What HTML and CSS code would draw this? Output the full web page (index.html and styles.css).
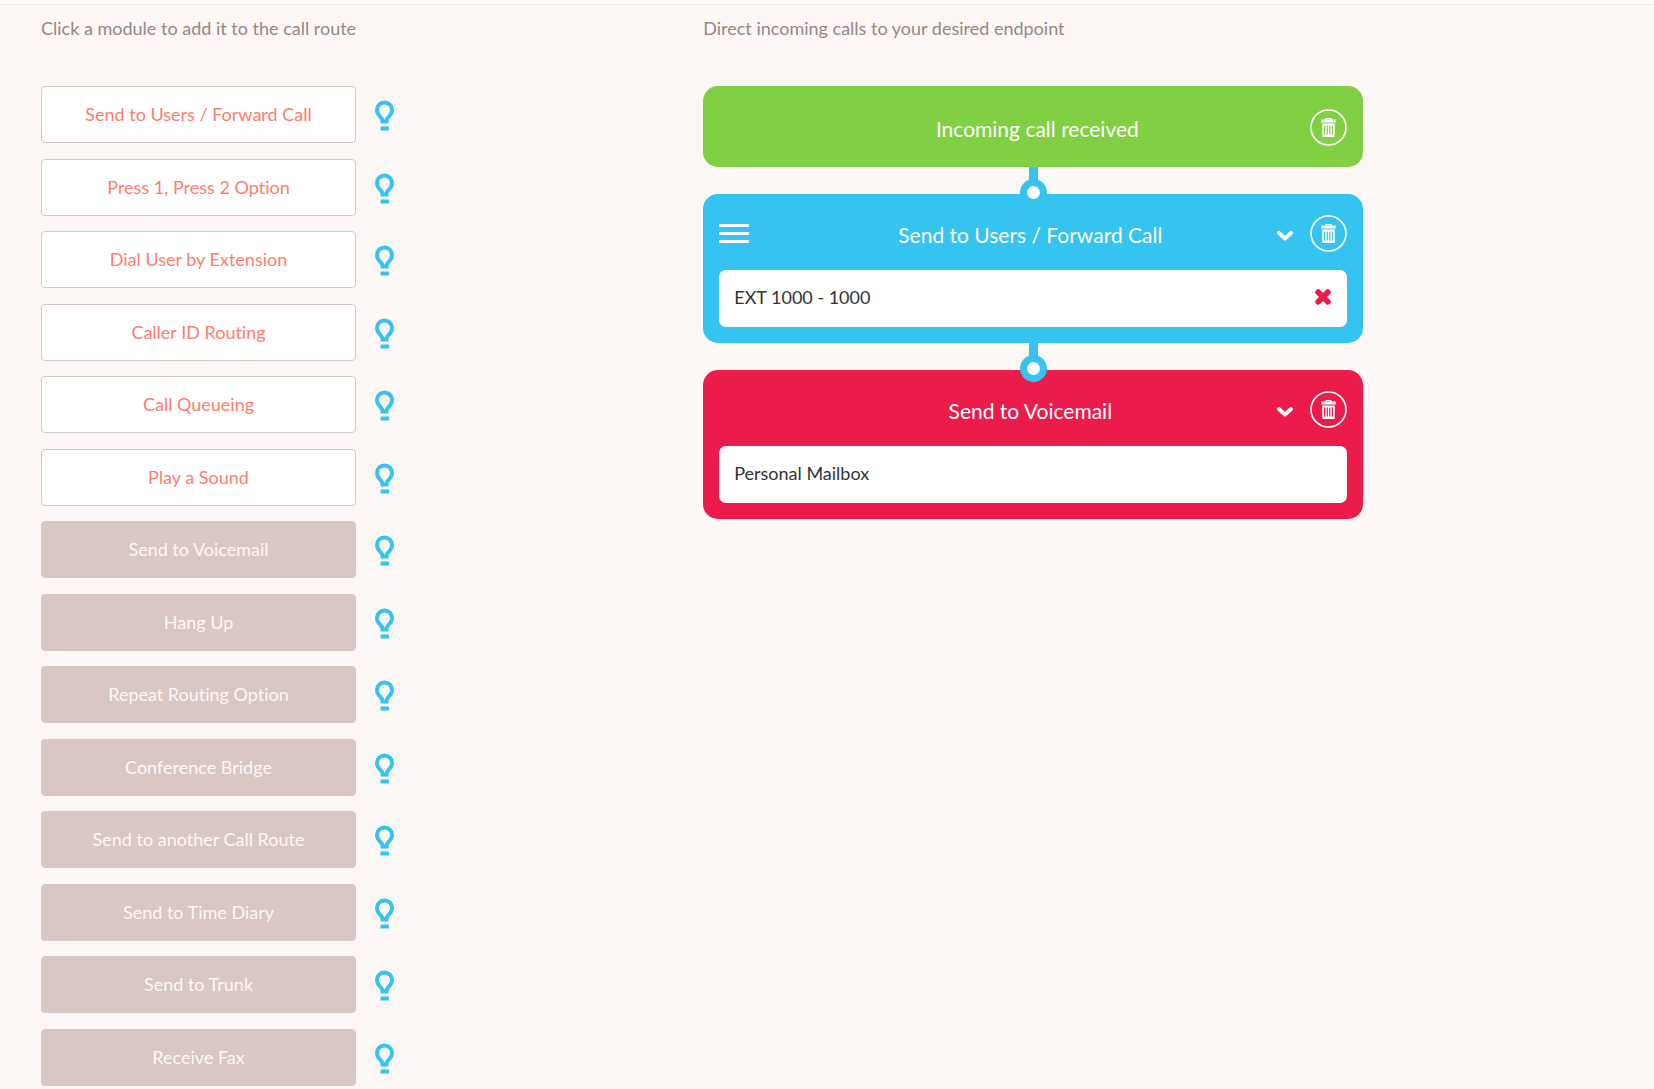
FILE: index.html
```
<!DOCTYPE html>
<html lang="en">
<head>
    <meta charset="UTF-8">
    <meta name="viewport" content="width=device-width, initial-scale=1.0">
    <title>Call Route</title>
    <link rel="stylesheet" href="styles.css">
</head>
<body>

    <!-- Shared icons -->
    <svg class="icon-defs" aria-hidden="true">
        <symbol id="icon-bulb" viewBox="0 0 19 31">
            <path fill-rule="evenodd" d="M9.5 0.5A9.4 9.4 0 0 1 19 10c0 3.200-1.500 5.400-3.200 7.300-1.600 1.800-2.300 2.600-2.300 4.200V23.500h-8V21.500c0-1.600-.7-2.400-2.300-4.200C1.500 15.400 0 13.200 0 10A9.400 9.400 0 0 1 9.500 .5zM9.500 4.500A5.400 5.400 0 0 0 4 10c0 2.300 1 3.600 2.500 5.200C8 16.800 9 18.200 9.500 20c.5-1.800 1.500-3.200 3-4.800C14 13.600 15 12.300 15 10A5.400 5.400 0 0 0 9.500 4.500z"/>
            <path d="M5.500 26.500h8.500v4h-8.500z"/>
        </symbol>
        <symbol id="icon-trash" viewBox="0 0 37 37">
            <circle cx="18.500" cy="18.500" r="17.500" fill="none" stroke="currentColor" stroke-width="1.700"/>
            <path fill-rule="evenodd" d="M15 10.500q0-1.500 1.500-1.500h4q1.500 0 1.500 1.500h3q.8 0 .8 1v2H11.200v-2q0-1 .8-1zM16.500 10.500h4v-.6h-4zM12.200 14.500h12.600V27q0 1-1 1H13.200q-1 0-1-1zM14 16.500v9h1.300v-9zM16.700 16.500v9h1.200v-9zM19.200 16.500v9h1.200v-9zM21.800 16.500v9h1.200v-9z"/>
        </symbol>
        <symbol id="icon-chevron" viewBox="0 0 16 10">
            <path d="M2 2l6 5.500L14 2" fill="none" stroke="currentColor" stroke-width="3.800" stroke-linecap="round" stroke-linejoin="round"/>
        </symbol>
        <symbol id="icon-cross" viewBox="0 0 16 16">
            <path d="M3.200 3.200l9.600 9.600M12.800 3.200l-9.600 9.600" fill="none" stroke="currentColor" stroke-width="5.800" stroke-linecap="round"/>
        </symbol>
    </svg>

    <div class="top-bar"></div>

    <main class="page">
        <!-- Modules -->
        <section class="column">
            <p class="intro">Click a module to add it to the call route</p>
            <ul class="modules" id="modules"></ul>
        </section>

        <!-- Call route -->
        <section class="column">
            <p class="intro">Direct incoming calls to your desired endpoint</p>
            <div class="route">
                <div class="card card-start">
                    <div class="card-header">
                        <h2 class="card-title">Incoming call received</h2>
                        <div class="card-actions">
                            <button class="icon-button" aria-label="Delete route"><svg class="trash"><use href="#icon-trash"/></svg></button>
                        </div>
                    </div>
                </div>

                <div class="connector"></div>

                <div class="card card-users">
                    <div class="card-header">
                        <button class="icon-button handle" aria-label="Move"><span></span><span></span><span></span></button>
                        <h2 class="card-title">Send to Users / Forward Call</h2>
                        <div class="card-actions">
                            <button class="icon-button" aria-label="Expand"><svg class="chevron"><use href="#icon-chevron"/></svg></button>
                            <button class="icon-button" aria-label="Delete"><svg class="trash"><use href="#icon-trash"/></svg></button>
                        </div>
                    </div>
                    <div class="card-item">
                        <span>EXT 1000 - 1000</span>
                        <button class="icon-button remove" aria-label="Remove"><svg class="cross"><use href="#icon-cross"/></svg></button>
                    </div>
                </div>

                <div class="connector"></div>

                <div class="card card-voicemail">
                    <div class="card-header">
                        <h2 class="card-title">Send to Voicemail</h2>
                        <div class="card-actions">
                            <button class="icon-button" aria-label="Expand"><svg class="chevron"><use href="#icon-chevron"/></svg></button>
                            <button class="icon-button" aria-label="Delete"><svg class="trash"><use href="#icon-trash"/></svg></button>
                        </div>
                    </div>
                    <div class="card-item">
                        <span>Personal Mailbox</span>
                    </div>
                </div>
            </div>
        </section>
    </main>

    <script src="script.js"></script>

</body>
</html>
```

FILE: styles.css
```
*, *::after {
    box-sizing: border-box;
}
body {
    margin: 0;
    min-height: 100vh;
    display: flex;
    flex-direction: column;
    background: #fdf8f6;
    font-family: Lato, 'Liberation Sans', sans-serif;
    font-size: 18px;
    font-variant-ligatures: none;
    line-height: 24px;
    color: #333;
}
button {
    font: inherit;
    font-variant-ligatures: none;
    cursor: pointer;
}
.icon-defs {
    position: absolute;
    width: 0;
    height: 0;
}
.icon-defs symbol {
    fill: currentColor;
}
svg {
    display: block;
    fill: currentColor;
}
.top-bar {
    height: 5px;
    background: #fff;
    border-bottom: 1px solid #f7e3df;
}
.page {
    flex: 1;
    display: grid;
    grid-template-columns: 42% 42%;
    column-gap: 2px;
    padding: 11px 41px 3px;
}
.column {
    display: flex;
    flex-direction: column;
}
.intro {
    margin: 0 0 46px;
    color: #968783;
}

/* Modules */
.modules {
    flex: 1;
    display: flex;
    flex-direction: column;
    justify-content: space-between;
    margin: 0;
    padding: 0;
    list-style: none;
}
.module {
    display: flex;
    align-items: center;
    gap: 19px;
}
.module-button {
    width: 315px;
    height: 57px;
    padding: 0 0 1px;
    border: 1px solid #d8c7c3;
    border-radius: 4px;
    background: #fff;
    color: #ff7d6c;
}
.module-button:disabled {
    background: #d8c7c3;
    color: #fdf8f6;
    cursor: default;
}
.icon-button {
    padding: 0;
    border: none;
    background: none;
    color: inherit;
}
.hint {
    padding-top: 2px;
    color: #35c3f0;
}
.bulb {
    width: 19px;
    height: 31px;
}

/* Route cards */
.card {
    padding: 0 16px 16px;
    border-radius: 15px;
    color: #fff;
}
.card-start {
    padding-bottom: 0;
    background: #81cf42;
}
.card-users {
    background: #35c3f0;
}
.card-voicemail {
    background: #eb1c4b;
}
.card-header {
    display: grid;
    grid-template-columns: 72px 1fr 78px;
    align-items: center;
    height: 76px;
    padding-top: 3px;
}
.card-start .card-header {
    grid-template-columns: 45px 1fr 37px;
    height: 81px;
    padding-top: 1px;
}
.card-title {
    grid-column: 2;
    margin: 0;
    padding-top: 3px;
    font-size: 21px;
    font-weight: 400;
    text-align: center;
}
.card-actions {
    display: flex;
    align-items: center;
    justify-content: flex-end;
    gap: 17px;
}
.handle {
    display: flex;
    flex-direction: column;
    gap: 5px;
    width: 30px;
}
.handle span {
    width: 30px;
    height: 3px;
    background: #fff;
}
.trash {
    width: 37px;
    height: 37px;
}
.chevron {
    width: 16px;
    height: 10px;
    margin-top: 4px;
}
.card-item {
    display: flex;
    align-items: center;
    justify-content: space-between;
    height: 57px;
    padding: 0 16px 3px 15px;
    border-radius: 7px;
    background: #fff;
    color: #333;
}
.remove {
    color: #eb1c4b;
}
.cross {
    width: 16px;
    height: 16px;
}

/* Line and ring between two cards */
.connector {
    position: relative;
    width: 9px;
    height: 27px;
    margin: 0 auto;
    background: #35c3f0;
}
.connector::after {
    content: '';
    position: absolute;
    top: 12px;
    left: -9px;
    width: 27px;
    height: 27px;
    border: 7px solid #35c3f0;
    border-radius: 50%;
    background: #fff;
}
```

FILE: script.js
```
const modules = [
    { name: 'Send to Users / Forward Call', enabled: true },
    { name: 'Press 1, Press 2 Option', enabled: true },
    { name: 'Dial User by Extension', enabled: true },
    { name: 'Caller ID Routing', enabled: true },
    { name: 'Call Queueing', enabled: true },
    { name: 'Play a Sound', enabled: true },
    { name: 'Send to Voicemail', enabled: false },
    { name: 'Hang Up', enabled: false },
    { name: 'Repeat Routing Option', enabled: false },
    { name: 'Conference Bridge', enabled: false },
    { name: 'Send to another Call Route', enabled: false },
    { name: 'Send to Time Diary', enabled: false },
    { name: 'Send to Trunk', enabled: false },
    { name: 'Receive Fax', enabled: false }
];

const list = document.getElementById('modules');

modules.forEach(module => {
    const item = document.createElement('li');
    item.className = 'module';
    item.innerHTML = `
        <button class="module-button" ${module.enabled ? '' : 'disabled'}>${module.name}</button>
        <button class="icon-button hint" aria-label="About ${module.name}"><svg class="bulb"><use href="#icon-bulb"/></svg></button>
    `;
    list.appendChild(item);
});
```
